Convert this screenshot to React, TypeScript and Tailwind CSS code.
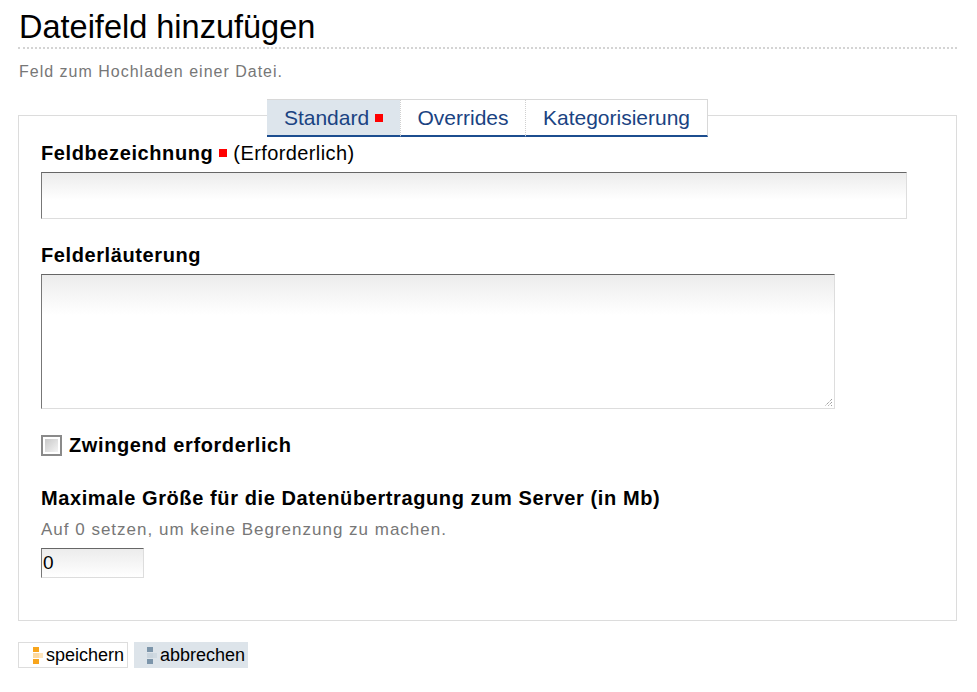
const font = { fontFamily: '"Liberation Sans", Arial, sans-serif' };

function ButtonIcon({ dark, light }: { dark: string; light: string }) {
  return (
    <svg width="11" height="17" viewBox="0 0 11 17" className="shrink-0">
      <rect x="0" y="0" width="6" height="5" fill={dark} />
      <rect x="0" y="6" width="6" height="5" fill={light} />
      <rect x="6" y="6" width="4" height="5" fill={light} opacity="0.7" />
      <rect x="0" y="12" width="6" height="5" fill={dark} />
    </svg>
  );
}

export default function App() {
  const tabs = [
    { name: 'Standard', active: true, w: 'w-[133px]' },
    { name: 'Overrides', active: false, w: 'w-[125px]' },
    { name: 'Kategorisierung', active: false, w: 'w-[183px]' },
  ];

  return (
    <div className="min-h-screen bg-white pl-[18px] pr-[20px] text-black" style={font}>
      <div className="pt-[9px]">
        <h1 className="border-b-2 border-dotted border-[#d4d4d4] pb-[2px] pl-[1px] text-[32.5px] leading-[36px] font-normal">
          Dateifeld hinzufügen
        </h1>
        <p className="mt-[14px] pl-[1px] text-[16px] leading-[18px] tracking-[1px] text-[#777]">
          Feld zum Hochladen einer Datei.
        </p>
      </div>

      <div className="mt-[34px] border border-[#dcdcdc] px-[22px] pb-[42px]">
        <div className="-mt-[17px] flex justify-center">
          <div className="flex border-t border-[#d8d8d8] bg-white">
            {tabs.map((tab, i) => (
              <div
                key={tab.name}
                className={`flex h-[37px] items-center justify-center border-b-2 border-b-[#1c4d8f] text-[21px] text-[#1a4382] ${tab.w} ${
                  tab.active ? 'bg-[#dde5ec]' : 'bg-white'
                } ${i > 0 ? 'border-l border-l-[#d0d0d0]' : ''} ${
                  i === tabs.length - 1 ? 'border-r border-r-[#d8d8d8]' : ''
                }`}
                style={i > 0 ? { borderLeftStyle: 'dotted' } : undefined}
              >
                {tab.name}
                {tab.active && <span className="ml-[6px] inline-block h-[8px] w-[8px] bg-[#f00]" />}
              </div>
            ))}
          </div>
        </div>

        <div className="mt-[5px] flex items-center text-[20px] leading-[22px]">
          <span className="font-bold tracking-[0.6px]">Feldbezeichnung</span>
          <span className="ml-[6px] mr-[6px] inline-block h-[8px] w-[8px] bg-[#f00]" />
          <span className="tracking-[0.4px]">(Erforderlich)</span>
        </div>
        <div className="mt-[8px] h-[47px] w-[866px] border border-[#ddd] border-t-[#666] border-l-[#777] bg-gradient-to-b from-[#ececec] to-white to-60%" />

        <div className="mt-[25px] text-[20px] leading-[22px] font-bold tracking-[0.6px]">Felderläuterung</div>
        <div className="relative mt-[8px] h-[135px] w-[794px] border border-[#ddd] border-t-[#666] border-l-[#777] bg-gradient-to-b from-[#ececec] to-white to-30%">
          <svg width="10" height="10" viewBox="0 0 10 10" className="absolute right-[1px] bottom-[1px]">
            <path d="M9 2 L2 9 M9 5 L5 9 M9 8 L8 9" stroke="#777" strokeWidth="1" strokeDasharray="1 1" />
          </svg>
        </div>

        <div className="mt-[25px] flex items-center">
          <div className="h-[21px] w-[21px] border-2 border-[#8a8a8a] bg-white p-[2px]">
            <div className="h-full w-full bg-gradient-to-br from-[#c8c8c8] to-[#f4f4f4]" />
          </div>
          <span className="ml-[7px] text-[20px] leading-[22px] font-bold tracking-[0.6px]">Zwingend erforderlich</span>
        </div>

        <div className="mt-[31px] text-[20px] leading-[22px] font-bold tracking-[0.6px]">
          Maximale Größe für die Datenübertragung zum Server (in Mb)
        </div>
        <div className="mt-[11px] text-[17px] leading-[20px] tracking-[1px] text-[#777]">
          Auf 0 setzen, um keine Begrenzung zu machen.
        </div>
        <div className="mt-[8px] flex h-[30px] w-[103px] items-center border border-[#ddd] border-t-[#666] border-l-[#777] bg-gradient-to-b from-[#ececec] to-white pl-[1px] text-[19px]">
          0
        </div>
      </div>

      <div className="mt-[21px] flex gap-[6px]">
        <div className="flex h-[26px] items-center gap-[2px] border border-[#ddd] bg-white pr-[3px] pl-[14px] text-[18px]">
          <ButtonIcon dark="#f8a51c" light="#fcd9a0" />
          speichern
        </div>
        <div className="flex h-[26px] items-center gap-[2px] bg-[#dde4ea] pr-[3px] pl-[13px] text-[18px]">
          <ButtonIcon dark="#7c95aa" light="#c9d4dd" />
          abbrechen
        </div>
      </div>
    </div>
  );
}
